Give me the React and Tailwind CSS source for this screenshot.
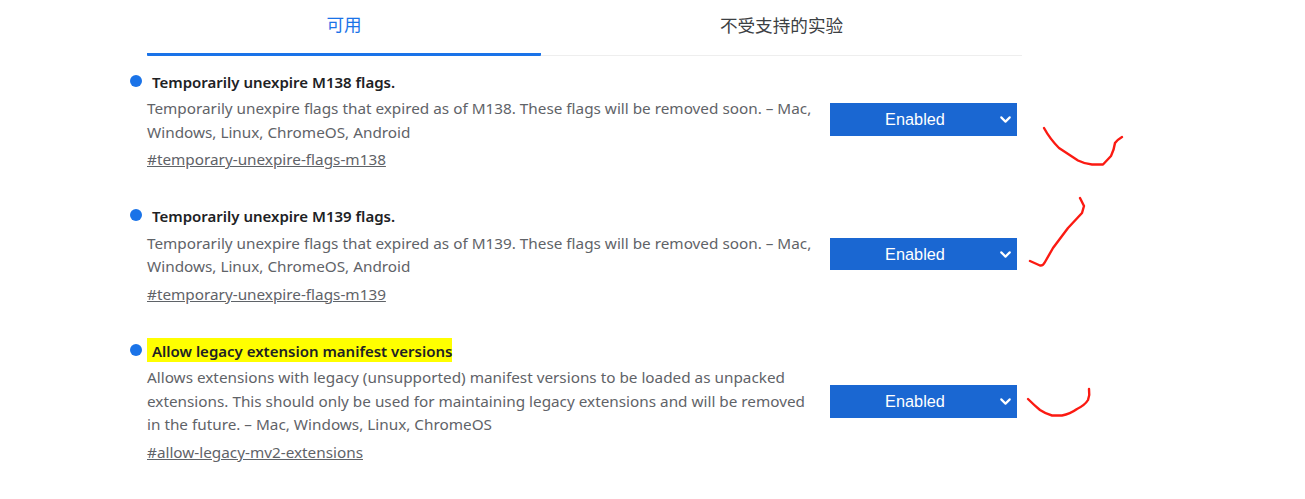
import React from 'react';
import { ChevronDown } from 'lucide-react';

const flags = [
  {
    title: 'Temporarily unexpire M138 flags.',
    desc: 'Temporarily unexpire flags that expired as of M138. These flags will be removed soon. – Mac, Windows, Linux, ChromeOS, Android',
    link: '#temporary-unexpire-flags-m138',
  },
  {
    title: 'Temporarily unexpire M139 flags.',
    desc: 'Temporarily unexpire flags that expired as of M139. These flags will be removed soon. – Mac, Windows, Linux, ChromeOS, Android',
    link: '#temporary-unexpire-flags-m139',
  },
  {
    title: 'Allow legacy extension manifest versions',
    desc: 'Allows extensions with legacy (unsupported) manifest versions to be loaded as unpacked extensions. This should only be used for maintaining legacy extensions and will be removed in the future. – Mac, Windows, Linux, ChromeOS',
    link: '#allow-legacy-mv2-extensions',
    highlight: true,
  },
];

const FlagRow = ({ flag }) => {
  return (
    <div className="flex items-center">
      <div className="w-[685px]">
        <div className="flex items-center h-6">
          <span className="w-3 h-3 rounded-full bg-[#1a73e8] mr-[5px]" />
          <h2 className={`h-6 text-[15px] font-semibold leading-[26px] pl-[5px] text-[#202124] ${flag.highlight ? 'bg-[#ffff00]' : ''}`}>
            {flag.title}
          </h2>
        </div>
        <div className="pl-[17px] mt-[4.7px]">
          <p className="text-[15.3px] leading-[23.5px] text-[#5f6368]">{flag.desc}</p>
          <a href={flag.link} className="block mt-[3px] text-[15.3px] leading-6 text-[#5f6368] underline">
            {flag.link}
          </a>
        </div>
      </div>
      <div className={`ml-[15px] w-[187px] h-[32.5px] bg-[#1a67d2] flex items-center justify-center relative text-white text-[16.3px] font-['Liberation_Sans',sans-serif] ${flag.highlight ? 'mt-[1px]' : '-mt-[1px]'}`}>
        <span className="-ml-[17px]">Enabled</span>
        <ChevronDown className="absolute right-[3px] w-[17px] h-[17px]" strokeWidth={3} />
      </div>
    </div>
  );
};

const App = () => {
  return (
    <div className="relative w-[1305px] h-[499px] overflow-hidden bg-white font-['Noto_Sans','Noto_Sans_CJK_SC',sans-serif]">
      <div className="ml-[130px] w-[892px]">
        <div className="ml-[17px] flex h-14 border-b border-[#eeeeee] text-[17.6px]">
          <div className="w-[394px] h-14 border-b-[3px] border-[#1a73e8] rounded-b-[1px] flex items-center justify-center text-[#1a73e8] pb-[5px]">
            可用
          </div>
          <div className="flex-1 flex items-center justify-center text-[#3c4043] pb-[5px]">不受支持的实验</div>
        </div>
        <div className="mt-[12.6px] flex flex-col gap-[31.9px]">
          {flags.map((flag) => (
            <FlagRow key={flag.link} flag={flag} />
          ))}
        </div>
      </div>
      {/* red pen marks drawn over the screenshot */}
      <svg className="absolute inset-0" width="1305" height="499" fill="none" stroke="#fb1a12" strokeWidth="2.4" strokeLinecap="round" strokeLinejoin="round">
        <path d="M1044 128 Q1050 139 1059 148 L1078 160.500 Q1085 164 1092 164.500 L1103 164.500 L1111 156 Q1114 150 1115 143 Q1117 140 1122 137" />
        <path d="M1080 198 L1084 206 L1082 213 L1068 228 L1053 248 L1045 262 Q1043 266 1040 265.500 L1030 261" />
        <path d="M1028 399 Q1034 405 1040 410 Q1046 414 1052 415.500 L1062 415.500 Q1070 414 1077 409 Q1085 405 1088 400 Q1090 395 1089 389" />
      </svg>
    </div>
  );
};

export default App;
